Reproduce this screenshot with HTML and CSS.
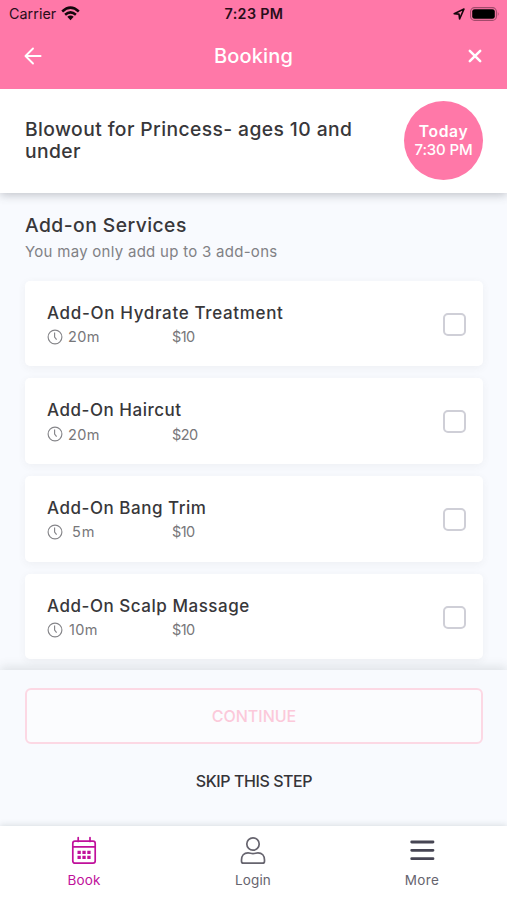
FILE: index.html
```html
<!DOCTYPE html>
<html lang="en">
<head>
<meta charset="utf-8">
<title>Booking</title>
<link rel="stylesheet" href="styles.css">
</head>
<body>
<svg width="0" height="0" class="defs">
  <symbol id="clock" viewBox="0 0 16 16"><circle cx="8" cy="8" r="6.9"/><path d="M7.6 3.6v4.5l2 2.5"/></symbol>
</svg>
<div class="app">
  <header class="header">
    <div class="status">
      <div class="carrier"><span>Carrier</span>
        <svg width="19" height="15" viewBox="0 0 19 15"><g fill="none" stroke="#14070c" stroke-width="2.5"><path d="M1.2 5.5Q9.5-2.2 17.8 5.5"/><path d="M4.1 8.8Q9.5 3.9 14.9 8.8"/></g><path d="M6.3 10.8Q9.5 8.4 12.7 10.8L9.5 14.2z" fill="#14070c"/></svg>
      </div>
      <div class="time">7:23 PM</div>
      <div class="power">
        <svg width="12" height="12" viewBox="0 0 12 12"><path d="M1.2 5.7L11 1 6.6 10.8 6 6.1z" fill="none" stroke="#14070c" stroke-width="1.6" stroke-linejoin="round"/></svg>
        <svg width="30" height="14" viewBox="0 0 30 14"><rect x=".6" y=".6" width="25.8" height="12.8" rx="4" fill="none" stroke="#a24a6b" stroke-width="1.1"/><rect x="2.2" y="2.2" width="22.6" height="9.6" rx="2.4"/><path d="M27.8 4.8q1.8 2.2 0 4.4z" fill="#a24a6b"/></svg>
      </div>
    </div>
    <div class="nav">
      <svg width="18" height="18" viewBox="0 0 18 18"><path d="M9 1.5L1.5 9 9 16.5M1.8 9H16.6" fill="none" stroke="#fff" stroke-width="1.9" stroke-linecap="round" stroke-linejoin="round"/></svg>
      <h1>Booking</h1>
      <svg width="14" height="14" viewBox="0 0 14 14"><path d="M1.8 1.8l10.4 10.4M12.2 1.8L1.8 12.2" stroke="#fff" stroke-width="2.5" stroke-linecap="round"/></svg>
    </div>
  </header>
  <section class="summary">
    <h2>Blowout for Princess- ages 10 and<br>under</h2>
    <div class="when"><b>Today</b><span>7:30 PM</span></div>
  </section>
  <main class="content">
    <h2>Add-on Services</h2>
    <p class="hint">You may only add up to 3 add-ons</p>
    <div class="cards">
      <article class="card"><div class="info"><h3 class="wide">Add-On Hydrate Treatment</h3><p class="meta"><svg class="clock"><use href="#clock"/></svg><span class="duration">20m</span><span class="price">$10</span></p></div><i class="box"></i></article>
      <article class="card"><div class="info"><h3>Add-On Haircut</h3><p class="meta"><svg class="clock"><use href="#clock"/></svg><span class="duration">20m</span><span class="price">$20</span></p></div><i class="box"></i></article>
      <article class="card"><div class="info"><h3>Add-On Bang Trim</h3><p class="meta"><svg class="clock"><use href="#clock"/></svg><span class="duration short">5m</span><span class="price">$10</span></p></div><i class="box"></i></article>
      <article class="card"><div class="info"><h3>Add-On Scalp Massage</h3><p class="meta"><svg class="clock"><use href="#clock"/></svg><span class="duration ten">10m</span><span class="price">$10</span></p></div><i class="box"></i></article>
    </div>
  </main>
  <section class="actions">
    <button class="continue">CONTINUE</button>
    <button class="skip">SKIP THIS STEP</button>
  </section>
  <nav class="tabs">
    <a class="tab active"><svg width="28" height="30" viewBox="0 0 28 30" fill="none" stroke="currentColor" stroke-width="1.7"><rect x="2.8" y="5.2" width="22.4" height="22" rx="2.2"/><path d="M3 10.8h22M8.2 1.5v4M20 1.5v4" stroke-linecap="round"/><path d="M7.5 16.3h3.3M12.4 16.3h3.3M17.3 16.3h3.3M7.5 21.3h3.3M12.4 21.3h3.3M17.3 21.3h3.3" stroke-width="3.3"/></svg><span>Book</span></a>
    <a class="tab"><svg width="28" height="30" viewBox="0 0 28 30" fill="none" stroke="currentColor" stroke-width="1.7"><circle cx="14" cy="8" r="6.2"/><path d="M9 16.8C5 16.8 2.5 20 2.5 24v1.2q0 2 2 2h19q2 0 2-2V24c0-4-2.5-7.2-6.5-7.2-2 0-3 .9-5 .9s-3-.9-5-.9z"/></svg><span>Login</span></a>
    <a class="tab more"><svg width="28" height="30" viewBox="0 0 28 30" stroke="#464553" stroke-width="2.8" stroke-linecap="round"><path d="M3.7 6h21.3M3.7 14.3h21.3M3.7 22.7h21.3"/></svg><span>More</span></a>
  </nav>
</div>
</body>
</html>
```
FILE: styles.css
```css
* { box-sizing: border-box; }
body { margin: 0; font-family: Inter, "Liberation Sans", sans-serif; color: #38373a; }
h1, h2, h3, p { margin: 0; font-weight: 500; white-space: nowrap; }
svg { display: block; flex: none; }
.defs { position: absolute; }
.app { width: 507px; height: 900px; display: flex; flex-direction: column; overflow: hidden; background: #f8fafe; }

.header { height: 88.5px; flex: none; position: relative; z-index: 2; background: #ff78a8; color: #fff; }
.status { height: 28px; display: grid; grid-template-columns: 1fr auto 1fr; align-items: center; padding: 0 7px 0 9px; color: #280d19; font-size: 14.3px; }
.status span, .time { margin-top: -1px; }
.carrier { display: flex; align-items: center; gap: 5px; letter-spacing: .05px; }
.carrier svg { margin-top: -2px; }
.time { font-weight: 600; letter-spacing: .35px; margin-right: 1px; }
.power { display: flex; justify-content: flex-end; align-items: center; gap: 5px; margin-top: -1px; }
.nav { height: 56px; display: flex; align-items: center; justify-content: space-between; padding: 0 25px 0 24px; }
.nav h1 { font-size: 20px; letter-spacing: .15px; margin-right: 3px; }

.summary { height: 104.5px; flex: none; position: relative; z-index: 1; display: flex; align-items: center; justify-content: space-between; padding: 0 24px 0 25px; background: #fff; box-shadow: 0 2px 9px rgba(60, 65, 75, .3); }
.summary h2 { font-size: 19.3px; line-height: 22px; letter-spacing: .4px; margin-bottom: 2px; }
.when { width: 79px; height: 79px; border-radius: 50%; background: #ff78a8; color: #fff; display: flex; flex-direction: column; align-items: center; justify-content: center; font-size: 15px; line-height: 18px; font-weight: 500; letter-spacing: -.15px; }
.when b { font-weight: 600; font-size: 15.7px; letter-spacing: .6px; }

.content { height: 477px; flex: none; padding: 20px 24px 0 25px; overflow: hidden; }
.content h2 { font-size: 19.3px; line-height: 24px; letter-spacing: .45px; }
.hint { color: #818185; font-size: 15px; line-height: 20px; font-weight: 400; letter-spacing: .28px; margin-top: 5px; }
.cards { display: flex; flex-direction: column; gap: 12px; margin-top: 18.7px; }
.card { height: 85.7px; flex: none; display: flex; justify-content: space-between; align-items: center; padding: 0 17px 0 22px; background: #fff; border-radius: 5px; box-shadow: 0 2px 8px rgba(60, 65, 75, .06); }
.info { padding-top: 2px; }
.card h3 { font-size: 17px; line-height: 24px; letter-spacing: .53px; }
.card h3.wide { letter-spacing: .66px; }
.meta { display: flex; align-items: center; height: 24px; font-size: 14.5px; font-weight: 400; color: #77777a; }
.clock { width: 16px; height: 16px; fill: none; stroke: #858589; stroke-width: 1.15; }
.duration { width: 109px; padding-left: 5px; letter-spacing: .4px; }
.duration.short { padding-left: 9px; letter-spacing: 1px; }
.duration.ten { padding-left: 6px; }
.price { letter-spacing: -.6px; }
.box { width: 23px; height: 23px; margin-top: 1px; border: 2px solid #cfcfd7; border-radius: 5px; }

.actions { height: 156px; flex: none; position: relative; display: flex; flex-direction: column; padding: 18px 24px 0 25px; background: #f8fafe; box-shadow: 0 -3px 10px rgba(50, 65, 65, .13); }
button { font: 500 16px Inter, "Liberation Sans", sans-serif; border: 0; background: none; padding: 0; color: #353438; }
.continue { height: 56px; border: 2px solid #fcd8e4; border-radius: 6px; background: #fbfcfe; color: #fbc9da; }
.skip { height: 38px; margin-top: 18px; letter-spacing: -.42px; }

.tabs { height: 74px; flex: none; position: relative; display: grid; grid-template-columns: repeat(3, 1fr); background: #fff; box-shadow: 0 -1px 6px rgba(50, 65, 65, .15); }
.tab { display: flex; flex-direction: column; align-items: center; padding: 10px 1px 0 0; color: #66646e; font-size: 13.5px; line-height: 18px; letter-spacing: .1px; }
.tab span { margin-top: 5px; }
.more { letter-spacing: .4px; }
.active { color: #c0109b; }
```
